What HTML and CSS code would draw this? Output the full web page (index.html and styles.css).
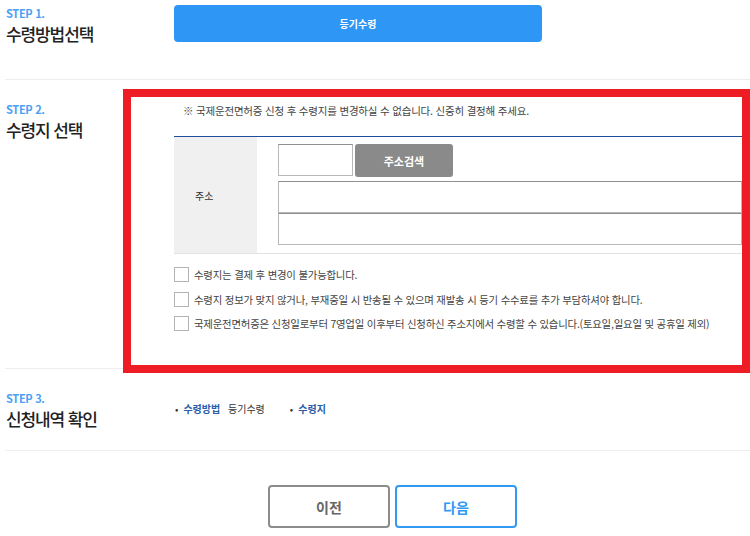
FILE: index.html
```html
<!doctype html>
<html lang="ko">
  <head>
    <meta charset="utf-8">
    <title>국제운전면허증 수령</title>
    <link rel="stylesheet" href="styles.css">
  </head>

  <body>
    <div class="wrap">
      <div class="step step-first">
        <div class="step-label">
          <span class="step-no">STEP 1.</span>
          <h2>수령방법선택</h2>
        </div>
        <div class="step-body">
          <button class="btn-method">등기수령</button>
        </div>
      </div>

      <div class="step step-place">
        <div class="step-label">
          <span class="step-no">STEP 2.</span>
          <h2>수령지 선택</h2>
        </div>
        <div class="step-body highlight">
          <p class="notice">※ 국제운전면허증 신청 후 수령지를 변경하실 수 없습니다. 신중히 결정해 주세요.</p>
          <table class="addr">
            <tr>
              <th>주소</th>
              <td>
                <div class="zip-row">
                  <input type="text" class="zip">
                  <button class="btn-search">주소검색</button>
                </div>
                <input type="text" class="addr-line addr-main">
                <input type="text" class="addr-line addr-detail">
              </td>
            </tr>
          </table>
          <ul class="agree">
            <li><input type="checkbox"><span>수령지는 결제 후 변경이 불가능합니다.</span></li>
            <li><input type="checkbox"><span>수령지 정보가 맞지 않거나, 부재중일 시 반송될 수 있으며 재발송 시 등기 수수료를 추가 부담하셔야 합니다.</span></li>
            <li><input type="checkbox"><span>국제운전면허증은 신청일로부터 7영업일 이후부터 신청하신 주소지에서 수령할 수 있습니다.(토요일,일요일 및 공휴일 제외)</span></li>
          </ul>
        </div>
      </div>

      <div class="step step-confirm">
        <div class="step-label">
          <span class="step-no">STEP 3.</span>
          <h2>신청내역 확인</h2>
        </div>
        <div class="step-body">
          <ul class="summary">
            <li><strong>수령방법</strong> 등기수령</li>
            <li><strong>수령지</strong></li>
          </ul>
        </div>
      </div>

      <div class="actions">
        <button class="btn-prev">이전</button>
        <button class="btn-next">다음</button>
      </div>
    </div>
  </body>
</html>
```

FILE: styles.css
```css
body {
    margin: 0;
    font-family: "Noto Sans CJK KR", "Noto Sans", sans-serif;
    color: #333;
    background: #fff;
}

.wrap {
    padding-left: 5px;
}

.step {
    display: grid;
    grid-template-columns: 118px 1fr;
    border-bottom: 1px solid #eee;
}

.step-label {
    padding-left: 1px;
}

.step-no {
    display: block;
    font-size: 11px;
    line-height: 14px;
    font-weight: bold;
    color: #4aa2f4;
    letter-spacing: -0.3px;
}

h2 {
    margin: 2px 0 0;
    font-size: 17px;
    line-height: 23px;
    font-weight: 500;
    color: #222;
    letter-spacing: -1.1px;
}

/* step 1 */
.step-first {
    height: 79px;
}

.step-first .step-label {
    padding-top: 6px;
}

.step-first .step-body {
    padding: 5px 0 0 51px;
}

.btn-method {
    width: 368px;
    height: 37px;
    border: 0;
    border-radius: 4px;
    background: #2e97f6;
    color: #fff;
    font-family: inherit;
    font-size: 10px;
    font-weight: bold;
}

/* step 2 */
.step-place {
    padding-top: 9px;
}

.step-place .step-label {
    padding-top: 13px;
}

.highlight {
    position: relative;
    height: 284px;
    box-sizing: border-box;
    margin-bottom: -5px;
    border: 8px solid #ee1c25;
    padding-left: 43px;
}

.notice {
    margin: 0;
    height: 39px;
    box-sizing: border-box;
    padding: 6px 0 0 9px;
    font-size: 10.5px;
    line-height: 16px;
    color: #444;
    letter-spacing: -0.2px;
}

.addr {
    width: 100%;
    border-collapse: collapse;
    border-top: 1px solid #1f4e9a;
    border-bottom: 1px solid #e2e2e2;
}

.addr th {
    width: 62px;
    padding: 0 0 0 21px;
    background: #f0f0f0;
    font-size: 10px;
    font-weight: normal;
    text-align: left;
    color: #333;
}

.addr td {
    padding: 7px 0 8px 21px;
}

.zip-row {
    display: flex;
    gap: 2px;
    margin-bottom: 4px;
}

input[type="text"] {
    display: block;
    height: 32px;
    box-sizing: border-box;
    border: 1px solid #b8b8b8;
    border-top-color: #8f8f8f;
    margin: 0;
}

.zip {
    width: 75px;
    border-color: #c8c8c8;
}

.btn-search {
    width: 98px;
    height: 33px;
    border: 0;
    border-radius: 3px;
    background: #8a8a8a;
    color: #fff;
    font-family: inherit;
    font-size: 11px;
    font-weight: bold;
}

.addr-line {
    width: 100%;
}

.addr-main {
    margin-bottom: 2px;
}

.addr-detail {
    border-top-color: #c8c8c8;
}

.agree {
    list-style: none;
    margin: 13px 0 0;
    padding: 0;
}

.agree li {
    display: flex;
    align-items: center;
    gap: 5px;
    height: 15px;
    margin-bottom: 9.5px;
    font-size: 10.4px;
    color: #444;
    letter-spacing: -0.2px;
}

.agree input {
    appearance: none;
    flex: none;
    width: 15px;
    height: 15px;
    margin: 0;
    border: 1px solid #b4b4b4;
    background: #fff;
}

/* step 3 */
.step-confirm {
    height: 81px;
}

.step-confirm .step-label {
    padding-top: 22px;
}

.summary {
    list-style: none;
    margin: 0;
    padding: 32px 0 0 52px;
    display: flex;
    gap: 25px;
    font-size: 10px;
    color: #333;
}

.summary li::before {
    content: "•";
    margin-right: 5px;
    color: #333;
}

.summary strong {
    color: #2a5ca8;
    margin-right: 5px;
}

/* buttons */
.actions {
    display: flex;
    gap: 5px;
    padding: 34px 0 0 263px;
}

.actions button {
    width: 122px;
    height: 43px;
    border-radius: 4px;
    background: #fff;
    font-family: inherit;
    font-size: 14px;
    font-weight: bold;
}

.btn-prev {
    border: 2px solid #8c8c8c;
    color: #666;
}

.btn-next {
    border: 2px solid #3399f3;
    color: #3399f3;
}
```
